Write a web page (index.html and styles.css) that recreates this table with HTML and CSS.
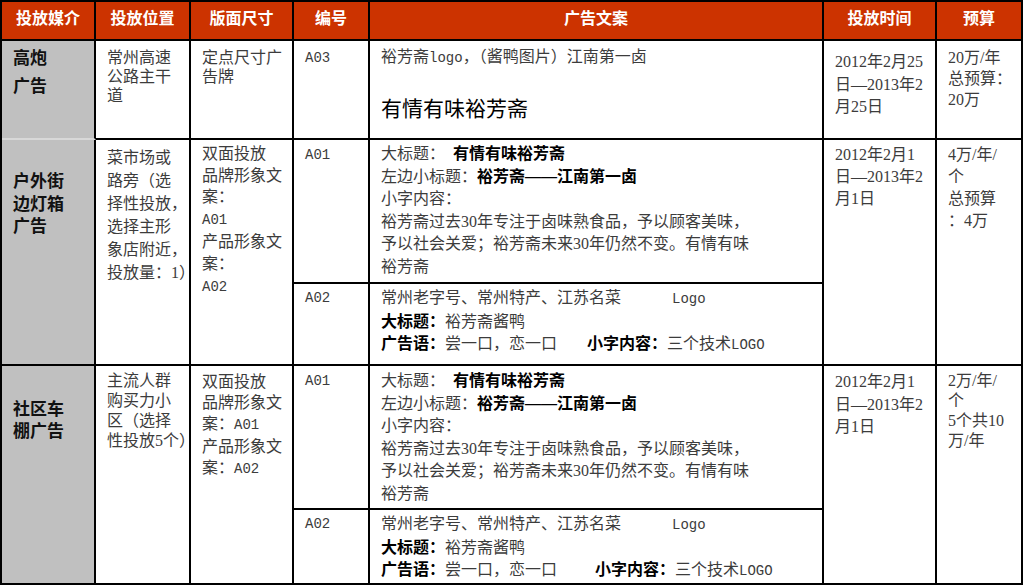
FILE: index.html
```html
<!DOCTYPE html>
<html lang="zh-CN">
<head>
<meta charset="utf-8">
<title>裕芳斋广告投放计划</title>
<link rel="stylesheet" href="styles.css">
</head>
<body>
<div class="sheet">
  <div class="hd">投放媒介</div>
  <div class="hd">投放位置</div>
  <div class="hd">版面尺寸</div>
  <div class="hd">编号</div>
  <div class="hd">广告文案</div>
  <div class="hd">投放时间</div>
  <div class="hd">预算</div>

  <div class="c media media-light m1">高炮<br>广告</div>
  <div class="c lh19 pt7">常州高速<br>公路主干<br>道</div>
  <div class="c lh19 pt7">定点尺寸广<br>告牌</div>
  <div class="c code pt6">A03</div>
  <div class="c pt5">裕芳斋<span class="mono">logo</span>，（酱鸭图片）江南第一卤<div class="slogan">有情有味裕芳斋</div></div>
  <div class="c pt10 lh22h">2012年2月25<br>日—2013年2<br>月25日</div>
  <div class="c pt6 lh21">20万/年<br>总预算：<br>20万</div>

  <div class="c media span2 m2">户外街<br>边灯箱<br>广告</div>
  <div class="c span2 lh23 pt6">菜市场或<br>路旁（选<br>择性投放，<br>选择主形<br>象店附近，<br>投放量：1）</div>
  <div class="c span2 lh21h pt3">双面投放<br>品牌形象文<br>案：<br><span class="mono">A01</span><br>产品形象文<br>案：<br><span class="mono">A02</span></div>
  <div class="c code">A01</div>
  <div class="c lh22h pt3">大标题：<b class="lead">有情有味裕芳斋</b><br>左边小标题：<b>裕芳斋——江南第一卤</b><br>小字内容：<br>裕芳斋过去30年专注于卤味熟食品，予以顾客美味，<br>予以社会关爱；裕芳斋未来30年仍然不变。有情有味<br>裕芳斋</div>
  <div class="c span2">2012年2月1<br>日—2013年2<br>月1日</div>
  <div class="c span2">4万/年/<br>个<br>总预算<br>：4万</div>
  <div class="c code pt3">A02</div>
  <div class="c lh22h pt3">常州老字号、常州特产、江苏名菜<span class="mono logo">Logo</span><br><b>大标题：</b>裕芳斋酱鸭<br><b>广告语：</b>尝一口，恋一口<b class="gap1">小字内容：</b>三个技术<span class="mono">LOGO</span></div>

  <div class="c media span2 m3">社区车<br>棚广告</div>
  <div class="c span2 lh20 pt5">主流人群<br>购买力小<br>区（选择<br>性投放5个）</div>
  <div class="c span2 lh21 pt5">双面投放<br>品牌形象文<br>案：<span class="mono">A01</span><br>产品形象文<br>案：<span class="mono">A02</span></div>
  <div class="c code">A01</div>
  <div class="c lh22h">大标题：<b class="lead">有情有味裕芳斋</b><br>左边小标题：<b>裕芳斋——江南第一卤</b><br>小字内容：<br>裕芳斋过去30年专注于卤味熟食品，予以顾客美味，<br>予以社会关爱；裕芳斋未来30年仍然不变。有情有味<br>裕芳斋</div>
  <div class="c span2 pt5 lh22h">2012年2月1<br>日—2013年2<br>月1日</div>
  <div class="c span2 lh20 pt5">2万/年/<br>个<br>5个共10<br>万/年</div>
  <div class="c code pt3">A02</div>
  <div class="c lh22h pt3">常州老字号、常州特产、江苏名菜<span class="mono logo">Logo</span><br><b>大标题：</b>裕芳斋酱鸭<br><b>广告语：</b>尝一口，恋一口<b class="gap2">小字内容：</b>三个技术<span class="mono">LOGO</span></div>
</div>
</body>
</html>
```

FILE: styles.css
```css
html, body {
  margin: 0;
  padding: 0;
  background: #ffffff;
}

body {
  font-family: "Liberation Serif", "Noto Sans CJK SC", serif;
  font-size: 16px;
  color: #3c3c3c;
}

.sheet {
  display: grid;
  grid-template-columns: 94px 95px 103px 76px 454px 113px 86px;
  grid-template-rows: 39px 99px 144px 82px 144px 75px;
  width: 1021px;
  border-left: 2px solid #000;
  border-top: 2px solid #000;
}

.hd,
.c {
  box-sizing: border-box;
  border-right: 2px solid #000;
  border-bottom: 2px solid #000;
  white-space: nowrap;
}

.hd {
  background: #cc3300;
  color: #ffffff;
  font-weight: bold;
  text-align: center;
  line-height: 22px;
  padding-top: 6px;
}

.c {
  padding: 4px 0 0 11px;
  line-height: 22px;
}

.span2 {
  grid-row: span 2;
}

.media {
  background: #c0c0c0;
  color: #111;
  font-weight: bold;
  font-size: 17px;
}

.media-light {
  border-bottom-color: #d8d8d8;
}

.m1 {
  line-height: 28px;
  padding-top: 4px;
}

.m2 {
  line-height: 22.5px;
  padding-top: 31px;
}

.m3 {
  line-height: 22px;
  padding-top: 33px;
}

.code,
.mono {
  font-family: "Liberation Mono", "Noto Sans CJK SC", monospace;
  font-size: 14px;
}

.code {
  line-height: 22px;
}

.logo {
  margin-left: 51px;
}

.slogan {
  margin-top: 26px;
  font-size: 21px;
  line-height: 28px;
  color: #000;
}

b {
  color: #000;
  font-weight: bold;
}

.lead {
  margin-left: 8px;
}

.gap1 {
  margin-left: 30px;
}

.gap2 {
  margin-left: 38px;
}

.lh19 { line-height: 19px; }
.lh20 { line-height: 20px; }
.lh21 { line-height: 21px; }
.lh21h { line-height: 21.6px; }
.lh22h { line-height: 22.5px; }
.lh23 { line-height: 23px; }

.pt3 { padding-top: 3px; }
.pt5 { padding-top: 5px; }
.pt6 { padding-top: 6px; }
.pt7 { padding-top: 7px; }
.pt10 { padding-top: 10px; }
```
